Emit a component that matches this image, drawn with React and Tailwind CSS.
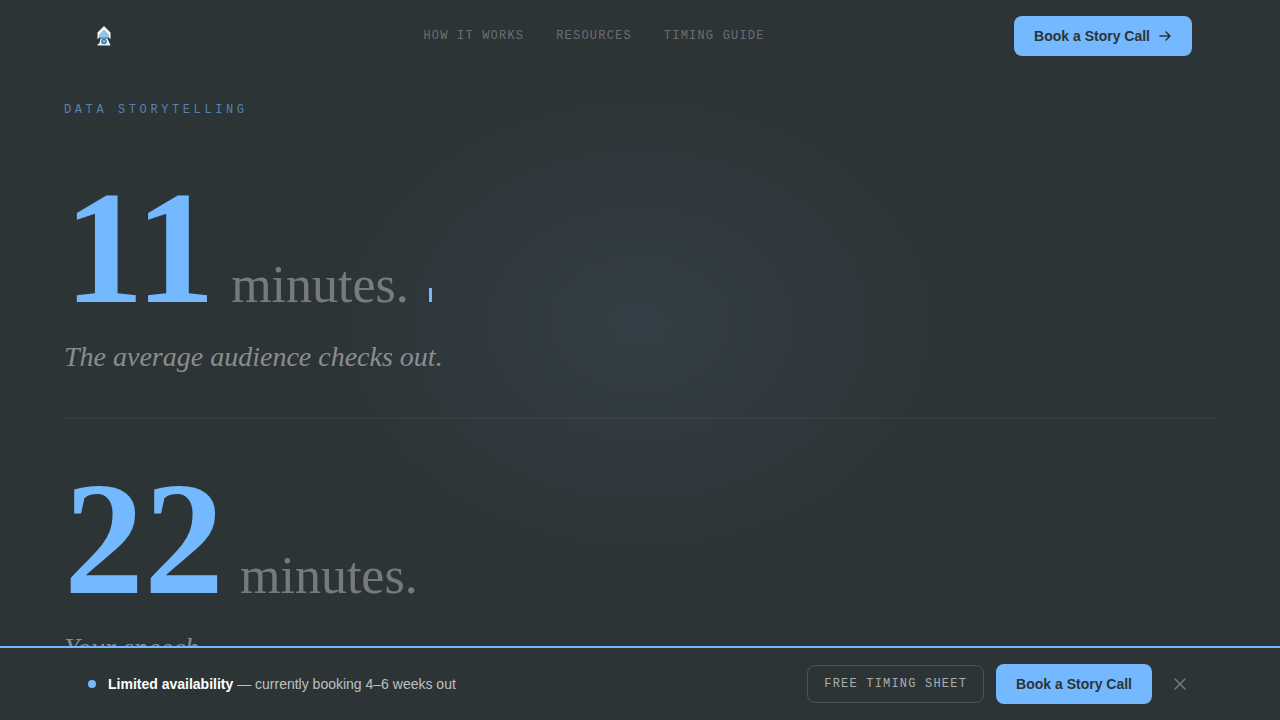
const navLinks = ["How It Works", "Resources", "Timing Guide"]

const stats = [
  { value: "11", caption: "The average audience checks out.", cursor: true },
  { value: "22", caption: "Your speech.", cursor: false },
]

function Logo() {
  return (
    <svg viewBox="0 0 16 22" className="h-[22px] w-4" aria-hidden="true">
      <path d="M8 1 L14.5 7.5 V14.5 L13 12.5 H3 L1.5 14.5 V7.5 Z" fill="#f4fbff" />
      <path d="M8 4.5 L10.5 7 L13 9.5 V12 H3 V9.5 L5.5 7 Z" fill="#93c5ea" />
      <path d="M4.5 13.5 H11.5 L13 17 L14.5 20.5 H1.5 V19.5 L3.5 18 Z" fill="#e4f6ff" />
      <circle cx="8" cy="16.5" r="2.8" fill="#2f6f9c" />
      <circle cx="8" cy="16.5" r="1.8" fill="#5db4ea" />
    </svg>
  )
}

function ArrowIcon() {
  return (
    <svg viewBox="0 0 14 14" className="size-[14px]" fill="none" stroke="currentColor" strokeWidth="1.5" strokeLinecap="round" strokeLinejoin="round" aria-hidden="true">
      <path d="M2 7H12M8 3L12 7L8 11" />
    </svg>
  )
}

function CloseIcon() {
  return (
    <svg viewBox="0 0 16 16" className="size-4" fill="none" stroke="currentColor" strokeWidth="1.5" strokeLinecap="round" aria-hidden="true">
      <path d="M3 3L13 13M13 3L3 13" />
    </svg>
  )
}

function Header() {
  return (
    <header className="flex h-[72px] items-center justify-between px-[88px]">
      <a href="#home" aria-label="Home" className="flex w-[86px] pl-2">
        <Logo />
      </a>
      <nav className="flex gap-8 font-['Liberation_Mono',monospace] text-xs uppercase tracking-[1.2px] text-white/30">
        {navLinks.map((label) => (
          <a key={label} href="#section">{label}</a>
        ))}
      </nav>
      <button
        type="button"
        className="flex h-10 items-center gap-2 rounded-lg bg-[#74b9ff] px-5 text-sm font-bold text-[#2d3436]"
      >
        Book a Story Call
        <ArrowIcon />
      </button>
    </header>
  )
}

function Stat({ value, caption, cursor }) {
  return (
    <section className="border-b border-white/6 pb-10 font-['Liberation_Serif',serif]">
      <div className="flex items-baseline gap-4">
        <span className="text-[160px] font-bold leading-[144px] text-[#74b9ff]">{value}</span>
        <span className="text-[52px] leading-[52px] text-white/35">minutes.</span>
        {cursor && <span className="ml-1 h-[14px] w-[3px] bg-[#74b9ff]" />}
      </div>
      <p className="mt-4 text-[28px] italic leading-[42px] text-white/45">{caption}</p>
    </section>
  )
}

function BookingBar() {
  return (
    <aside className="fixed inset-x-0 bottom-0 flex h-[74px] items-center justify-between border-t-2 border-[#74b9ff] bg-[#2d3436] px-[88px]">
      <p className="flex items-center gap-3 text-sm text-white/70">
        <span className="size-2 rounded-full bg-[#74b9ff]" />
        <span>
          <strong className="text-white">Limited availability</strong> — currently booking 4–6 weeks out
        </span>
      </p>
      <div className="flex items-center gap-3">
        <button
          type="button"
          className="h-[38px] rounded-lg border border-white/15 px-4 font-['Liberation_Mono',monospace] text-xs uppercase tracking-[1.2px] text-white/60"
        >
          Free Timing Sheet
        </button>
        <button type="button" className="h-10 rounded-lg bg-[#74b9ff] px-5 text-sm font-bold text-[#2d3436]">
          Book a Story Call
        </button>
        <button type="button" aria-label="Dismiss" className="ml-1 flex size-6 items-center justify-center text-white/35">
          <CloseIcon />
        </button>
      </div>
    </aside>
  )
}

export default function App() {
  return (
    <div className="h-screen overflow-hidden bg-[#2d3436] bg-[radial-gradient(ellipse_25%_34%_at_50%_45%,rgba(116,185,255,0.08)_0%,transparent_100%)] font-['Liberation_Sans',sans-serif]">
      <Header />
      <main className="px-16 pt-7">
        <p className="font-['Liberation_Mono',monospace] text-xs leading-5 uppercase tracking-[3.6px] text-[#74b9ff]/60">
          Data Storytelling
        </p>
        <div className="mt-14 space-y-12">
          {stats.map((stat) => (
            <Stat key={stat.value} {...stat} />
          ))}
        </div>
      </main>
      <BookingBar />
    </div>
  )
}
